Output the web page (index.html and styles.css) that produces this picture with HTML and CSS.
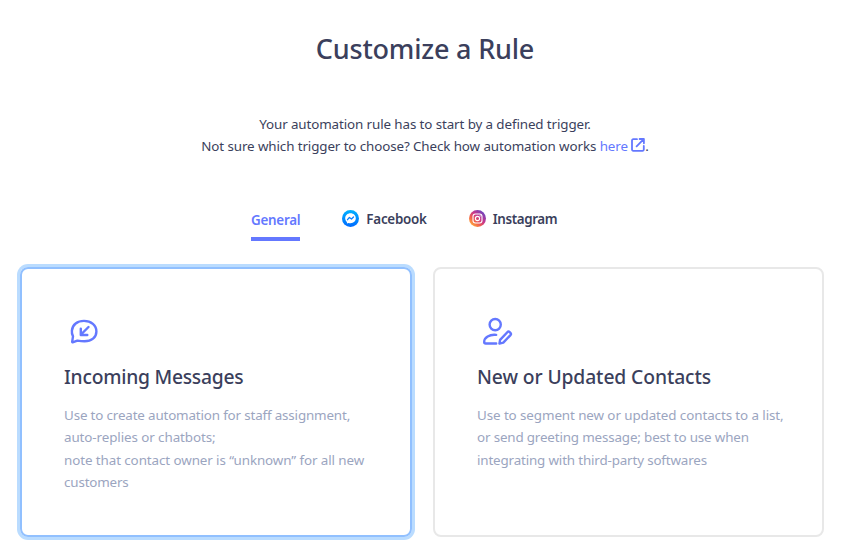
FILE: index.html
```html
<!DOCTYPE html>
<html lang="en">
<head>
    <meta charset="UTF-8">
    <meta name="viewport" content="width=device-width, initial-scale=1.0">
    <title>Customize a Rule</title>
    <link rel="stylesheet" href="styles.css">
</head>
<body>
    <div class="container">
        <h1>Customize a Rule</h1>
        <div class="intro">
            <p>Your automation rule has to start by a defined trigger.</p>
            <p>Not sure which trigger to choose? Check how automation works
                <a href="#">here <svg class="link-icon" width="14" height="14" viewBox="0 0 14 14"><path d="M6 1.2H2.2A1.2 1.2 0 0 0 1 2.4v9.2a1.2 1.2 0 0 0 1.2 1.2h9.4a1.2 1.2 0 0 0 1.2-1.2V8M8.6 1h4.3v4.3M12.7 1.2L5.6 8.3"/></svg></a>.</p>
        </div>

        <nav class="tabs">
            <a class="tab active" href="#"><span class="general">General</span></a>
            <a class="tab" href="#">
                <svg width="17" height="17" viewBox="0 0 17 17">
                    <defs>
                        <linearGradient id="fb" x1="0" y1="0" x2="0" y2="1">
                            <stop offset="0" stop-color="#00b2ff"/>
                            <stop offset="1" stop-color="#006aff"/>
                        </linearGradient>
                    </defs>
                    <circle cx="8.5" cy="8.5" r="8.5" fill="url(#fb)"/>
                    <path fill="#fff" d="M8.5 3.3c-3.1 0-5.3 2.2-5.3 5 0 1.5.6 2.8 1.7 3.7l.1 1.6 1.6-.7c.6.2 1.2.3 1.9.3 3.1 0 5.3-2.2 5.3-4.9s-2.2-5-5.3-5z"/>
                    <path class="bolt" d="M5.5 9.7L7.4 7.5L9.5 9L11.5 7"/>
                </svg>
                <span class="facebook">Facebook</span>
            </a>
            <a class="tab" href="#">
                <svg width="17" height="17" viewBox="0 0 17 17">
                    <defs>
                        <linearGradient id="ig" x1="0.1" y1="0.9" x2="0.85" y2="0.1">
                            <stop offset="0" stop-color="#ffb13d"/>
                            <stop offset="0.3" stop-color="#f2654a"/>
                            <stop offset="0.6" stop-color="#c9368b"/>
                            <stop offset="1" stop-color="#6a45c0"/>
                        </linearGradient>
                    </defs>
                    <circle cx="8.5" cy="8.5" r="8.5" fill="url(#ig)"/>
                    <g class="camera">
                        <rect x="4" y="4" width="9" height="9" rx="2.4"/>
                        <circle cx="8.5" cy="8.5" r="2.1"/>
                    </g>
                    <circle cx="11.1" cy="5.9" r="0.6" fill="#fff"/>
                </svg>
                <span class="instagram">Instagram</span>
            </a>
        </nav>

        <div class="cards">
            <div class="card selected">
                <svg class="card-icon" width="40" height="40" viewBox="0 0 40 40">
                    <path d="M8.2 30.6L9 25.4C8 23.6 7.7 21.7 7.9 19.6C8.4 13.6 13.4 9.9 20 9.9C27.2 9.9 32.4 14.4 32.4 20.4C32.4 26.6 27.4 30.3 20.6 30.3C18 30.3 15.6 30 13.4 29.6L9.2 31.2Q8 31.6 8.2 30.6Z"/>
                    <path d="M24.5 16L17 23.5M16.8 17.8V24H23.3"/>
                </svg>
                <h2 class="messages">Incoming Messages</h2>
                <p><span class="tight">Use to create automation for staff assignment,</span><br>auto-replies or chatbots;<br>note that contact owner is “unknown” for all new<br><span class="tight">customers</span></p>
            </div>
            <div class="card">
                <svg class="card-icon" width="40" height="40" viewBox="0 0 40 40">
                    <circle cx="18.2" cy="13.6" r="5.6"/>
                    <path d="M19.2 23.9C12.4 23.1 7.2 26.8 7.2 31Q7.2 32.5 8.7 32.5H19.2"/>
                    <path d="M22.4 32.6L23.1 28.9L30.3 21.2Q31.4 20 32.7 21.1L33.4 21.8Q34.5 22.9 33.5 24.1L26.3 31.7Z"/>
                </svg>
                <h2 class="contacts">New or Updated Contacts</h2>
                <p>Use to segment new or updated contacts to a list,<br><span class="tight">or send greeting message; best to use when</span><br><span class="tight">integrating with third-party softwares</span></p>
            </div>
        </div>
    </div>
</body>
</html>
```
FILE: styles.css
```css
* {
    box-sizing: border-box;
}

body {
    margin: 0;
    min-height: 550px;
    background: #fff;
    color: #3b3f5c;
    font-family: "Noto Sans", "Open Sans", sans-serif;
    font-size: 13.4px;
}

.container {
    padding: 29px 24px 0 20px;
}

h1, h2, p {
    margin: 0;
}

h1 {
    font-size: 27px;
    font-weight: 500;
    line-height: 40px;
    letter-spacing: -0.2px;
    text-align: center;
}

.intro {
    margin-top: 44px;
    line-height: 22px;
    letter-spacing: -0.11px;
    text-align: center;
    white-space: nowrap;
}

a {
    color: #6478ff;
    text-decoration: none;
}

svg path,
svg circle,
svg rect {
    stroke-linecap: round;
    stroke-linejoin: round;
}

.link-icon {
    vertical-align: -1px;
    fill: none;
    stroke: #6478ff;
    stroke-width: 1.8;
}

.tabs {
    display: flex;
    margin: 53px 0 0 231px;
    height: 31px;
    gap: 42px;
}

.tab {
    display: flex;
    height: 17px;
    gap: 7px;
    align-items: center;
    color: #3b3f5c;
    font-weight: 600;
    white-space: nowrap;
}

.tab.active {
    height: 31px;
    padding-bottom: 7px;
    border-bottom: 4px solid #6478ff;
    color: #6478ff;
}

.general,
.facebook {
    letter-spacing: -0.25px;
}

.instagram {
    letter-spacing: -0.38px;
}

.bolt {
    fill: none;
    stroke: #087fff;
    stroke-width: 1.3;
}

.camera {
    fill: none;
    stroke: #fff;
    stroke-width: 1.1;
}

.cards {
    display: grid;
    grid-template-columns: 392px 391px;
    gap: 21px;
    margin-top: 26px;
}

.card {
    height: 270px;
    padding: 42px 42px 0;
    border: 2px solid #e8e8e8;
    border-radius: 8px;
}

.card.selected {
    border-color: #91c0ff;
    box-shadow: 0 0 0 3px #badcff;
}

.card-icon {
    display: block;
    fill: none;
    stroke: #6478ff;
    stroke-width: 2.4;
}

h2 {
    margin-top: 12px;
    font-size: 19.3px;
    font-weight: 500;
    line-height: 28px;
    white-space: nowrap;
}

.messages {
    letter-spacing: -0.25px;
}

.contacts {
    letter-spacing: -0.11px;
}

.card p {
    margin-top: 13px;
    color: #9ba5bf;
    line-height: 22.4px;
    letter-spacing: -0.09px;
    white-space: nowrap;
}

.card .tight {
    letter-spacing: -0.16px;
}
```
